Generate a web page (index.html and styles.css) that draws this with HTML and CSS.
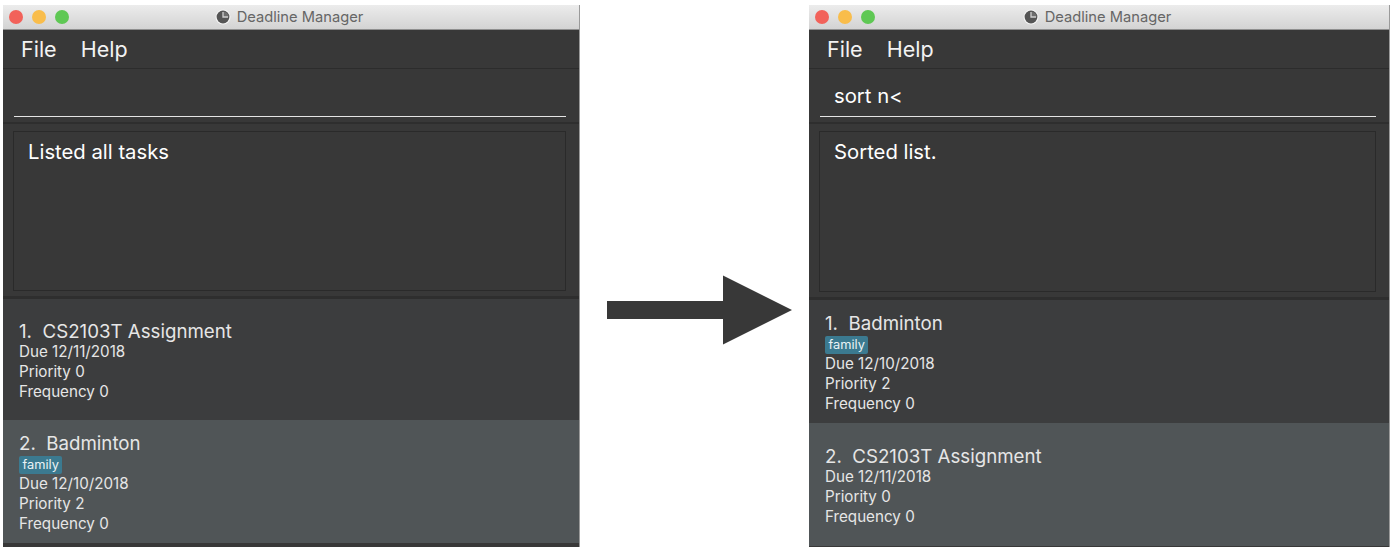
FILE: index.html
```html
<!DOCTYPE html>
<html lang="en">
  <head>
    <meta charset="UTF-8" />
    <meta name="viewport" content="width=device-width, initial-scale=1.0" />
    <title>Deadline Manager</title>
    <link rel="stylesheet" href="styles.css">
  </head>
  <body>
    <div class="page">
      <!-- Before: full list -->
      <section class="window">
        <div class="titleBar">
          <div class="lights">
            <span class="light red"></span>
            <span class="light yellow"></span>
            <span class="light green"></span>
          </div>
          <div class="windowTitle">
            <svg class="clock" viewBox="0 0 16 16" width="16" height="16">
              <circle cx="8" cy="8" r="7.5" fill="#f6f6f6" />
              <circle cx="8" cy="8" r="6.4" fill="#555555" />
              <path d="M8 8 V2.4 A5.6 5.6 0 0 1 13.6 8 Z" fill="#6e6e6e" />
              <path d="M8 3 V8 H13" fill="none" stroke="#d0d0d0" stroke-width="1.3" />
            </svg>
            <span>Deadline Manager</span>
          </div>
        </div>
        <nav class="menuBar"><span>File</span><span>Help</span></nav>
        <div class="commandBox"><div class="commandInput"></div></div>
        <div class="resultPane"><div class="resultBox">Listed all tasks</div></div>
        <div class="taskList">
          <article class="task taskShort">
            <h3>1.&nbsp; CS2103T Assignment</h3>
            <p>Due 12/11/2018</p>
            <p>Priority 0</p>
            <p>Frequency 0</p>
          </article>
          <article class="task selected">
            <h3>2.&nbsp; Badminton</h3>
            <div><span class="tag">family</span></div>
            <p>Due 12/10/2018</p>
            <p>Priority 2</p>
            <p>Frequency 0</p>
          </article>
        </div>
      </section>

      <div class="arrowSlot">
        <svg viewBox="0 0 186 70" width="186" height="70">
          <polygon points="0,26 116,26 116,0.5 185,35 116,69.5 116,44 0,44" fill="#383838" />
        </svg>
      </div>

      <!-- After: sorted list -->
      <section class="window windowWide">
        <div class="titleBar">
          <div class="lights">
            <span class="light red"></span>
            <span class="light yellow"></span>
            <span class="light green"></span>
          </div>
          <div class="windowTitle">
            <svg class="clock" viewBox="0 0 16 16" width="16" height="16">
              <circle cx="8" cy="8" r="7.5" fill="#f6f6f6" />
              <circle cx="8" cy="8" r="6.4" fill="#555555" />
              <path d="M8 8 V2.4 A5.6 5.6 0 0 1 13.6 8 Z" fill="#6e6e6e" />
              <path d="M8 3 V8 H13" fill="none" stroke="#d0d0d0" stroke-width="1.3" />
            </svg>
            <span>Deadline Manager</span>
          </div>
        </div>
        <nav class="menuBar"><span>File</span><span>Help</span></nav>
        <div class="commandBox"><div class="commandInput">sort n&lt;</div></div>
        <div class="resultPane paneTall"><div class="resultBox">Sorted list.</div></div>
        <div class="taskList">
          <article class="task">
            <h3>1.&nbsp; Badminton</h3>
            <div><span class="tag">family</span></div>
            <p>Due 12/10/2018</p>
            <p>Priority 2</p>
            <p>Frequency 0</p>
          </article>
          <article class="task selected">
            <h3>2.&nbsp; CS2103T Assignment</h3>
            <p>Due 12/11/2018</p>
            <p>Priority 0</p>
            <p>Frequency 0</p>
          </article>
        </div>
      </section>
    </div>
  </body>
</html>
```

FILE: styles.css
```css
* {
  margin: 0;
  padding: 0;
  box-sizing: border-box;
}

body {
  font-family: Inter, "Liberation Sans", sans-serif;
  background-color: #ffffff;
  color: #f0f0f0;
}

.page {
  display: flex;
  align-items: flex-start;
  height: 550px;
  padding: 5px 0 0 3px;
}

/* Window frame */
.window {
  display: flex;
  flex-direction: column;
  width: 577px;
  height: 542px;
  background-color: #383838;
  border-right: 1px solid #9a9a9a;
}

.windowWide {
  width: 581px;
}

.titleBar {
  position: relative;
  display: flex;
  align-items: center;
  justify-content: center;
  height: 25px;
  background: linear-gradient(#ececec, #d3d3d3);
  border-bottom: 1px solid #8f8f8f;
}

.lights {
  position: absolute;
  left: 6px;
  top: 5px;
  display: flex;
  gap: 9px;
}

.light {
  width: 14px;
  height: 14px;
  border-radius: 50%;
}

.red { background-color: #f2625a; }
.yellow { background-color: #f9bd4b; }
.green { background-color: #5fc854; }

.windowTitle {
  display: flex;
  align-items: center;
  gap: 6px;
  margin-right: 4px;
  font-size: 14.7px;
  color: #666666;
}

/* Menu */
.menuBar {
  display: flex;
  gap: 24px;
  height: 39px;
  padding: 6px 0 0 18px;
  font-size: 21.5px;
  line-height: 26px;
  color: #f2f2f2;
  border-bottom: 1px solid #2c2c2c;
}

/* Command box */
.commandBox {
  height: 55px;
  padding: 0 13px 0 11px;
  border-bottom: 2px solid #2e2e2e;
}

.commandInput {
  height: 48px;
  padding: 14px 0 0 14px;
  font-size: 20.3px;
  line-height: 26px;
  color: #ffffff;
  border-bottom: 1.5px solid #e4e4e4;
}

/* Result box */
.resultPane {
  height: 175px;
  padding: 7px 13px 5px 10px;
  border-bottom: 3px solid #2e2e2e;
}

.paneTall {
  height: 176px;
}

.resultBox {
  height: 100%;
  padding: 7px 14px;
  font-size: 20.3px;
  line-height: 26px;
  color: #ffffff;
  border: 1px solid #2a2a2a;
}

/* Task cards */
.taskList {
  display: flex;
  flex-direction: column;
}

.task {
  display: flex;
  flex-direction: column;
  justify-content: center;
  height: 123px;
  padding: 1px 0 0 16px;
  background-color: #3c3d3e;
  font-size: 15.2px;
  line-height: 20px;
  color: #e6e6e6;
}

.taskShort {
  height: 121px;
}

.task.selected {
  background-color: #505557;
}

.task h3 {
  padding-top: 2px;
  font-size: 18.7px;
  font-weight: 400;
  line-height: 21px;
}

.tag {
  display: inline-block;
  padding: 0 3.5px;
  font-size: 12.8px;
  line-height: 18px;
  color: #eaf2f5;
  background-color: #3b7a90;
  border-radius: 2px;
}

/* Arrow between the two windows */
.arrowSlot {
  flex: none;
  width: 229px;
  padding: 270px 0 0 27px;
}
```
